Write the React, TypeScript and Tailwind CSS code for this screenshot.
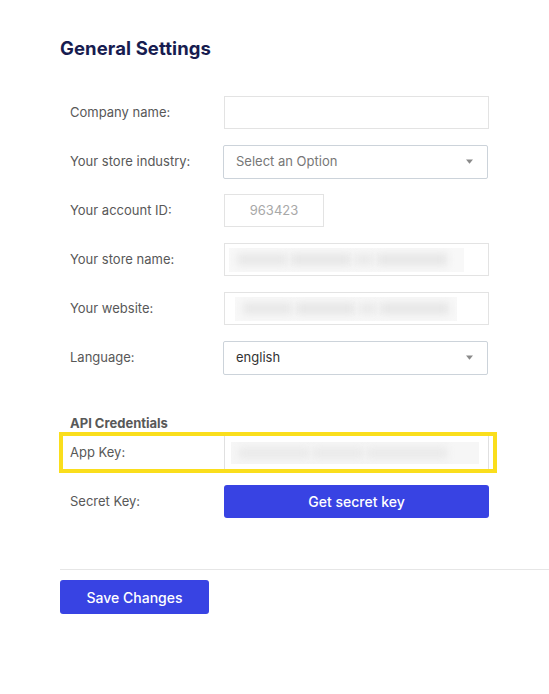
import React from "react";

const Arrow = () => (
  <svg width="7" height="5" viewBox="0 0 7 5" className="shrink-0">
    <path d="M0 0.5 L7 0.5 L3.5 4.8 Z" fill="#8a8a8a" />
  </svg>
);

const Blur = ({ w }: { w: string }) => (
  <div className={`h-[24px] ${w} bg-[#f8f8f8] flex items-center gap-[4px] px-[8px] overflow-hidden`}>
    <div className="h-[11px] w-[50px] bg-[#e6e6e6] blur-[4px]" />
    <div className="h-[11px] w-[60px] bg-[#e4e4e4] blur-[4px]" />
    <div className="h-[11px] w-[18px] bg-[#e8e8e8] blur-[4px]" />
    <div className="h-[11px] w-[70px] bg-[#e4e4e4] blur-[4px]" />
  </div>
);

const Label = ({ children }: { children: React.ReactNode }) => (
  <div className="w-[154px] shrink-0 text-[13px] text-[#585858]">{children}</div>
);

export default function App() {
  return (
    <div
      className="min-h-[694px] bg-white pt-[37px] pl-[60px]"
      style={{ fontFamily: "Inter, 'Liberation Sans', sans-serif" }}
    >
      <h1 className="text-[18.5px] leading-[22px] font-bold text-[#171c50] tracking-[0.1px]">
        General Settings
      </h1>

      <div className="mt-[37px] pl-[10px] w-[429px] flex flex-col">
        <div className="flex flex-col gap-[16px]">
          <div className="flex items-center h-[33px]">
            <Label>Company name:</Label>
            <div className="h-[33px] w-[265px] border border-[#e3e3e3]" />
          </div>
          <div className="flex items-center h-[33px]">
            <Label>Your store industry:</Label>
            <div className="-ml-px h-[34px] w-[265px] border border-[#ccd3da] rounded-[2px] flex items-center justify-between pl-[12px] pr-[14px]">
              <span className="text-[13px] text-[#777]">Select an Option</span>
              <Arrow />
            </div>
          </div>
          <div className="flex items-center h-[33px]">
            <Label>Your account ID:</Label>
            <div className="h-[33px] w-[100px] border border-[#e3e3e3] flex items-center justify-center text-[13px] text-[#a8a8a8]">
              963423
            </div>
          </div>
          <div className="flex items-center h-[33px]">
            <Label>Your store name:</Label>
            <div className="h-[33px] w-[265px] border border-[#e3e3e3] flex items-center pl-[4px]">
              <Blur w="w-[235px]" />
            </div>
          </div>
          <div className="flex items-center h-[33px]">
            <Label>Your website:</Label>
            <div className="h-[33px] w-[265px] border border-[#e3e3e3] flex items-center pl-[10px]">
              <Blur w="w-[222px]" />
            </div>
          </div>
          <div className="flex items-center h-[33px]">
            <Label>Language:</Label>
            <div className="-ml-px h-[34px] w-[265px] border border-[#ccd3da] rounded-[2px] flex items-center justify-between pl-[12px] pr-[14px]">
              <span className="text-[13px] text-[#333]">english</span>
              <Arrow />
            </div>
          </div>
        </div>

        <div className="mt-[41px] text-[13px] leading-[16px] font-bold text-[#585858]">
          API Credentials
        </div>

        <div className="mt-[1px] -ml-[11px] -mr-[8px] border-[4px] border-[#fade1c] flex items-center h-[41px] pl-[7px] pr-[4px]">
          <Label>App Key:</Label>
          <div className="h-full min-w-0 flex-1 border-x border-[#e0e0e0] flex items-center pl-[6px] pr-[9px]">
            <div className="h-[22px] w-full min-w-0 bg-[#f6f6f6] flex items-center gap-[4px] px-[8px] overflow-hidden">
              <div className="h-[10px] w-[70px] shrink-0 bg-[#e8e8e8] blur-[4px]" />
              <div className="h-[10px] w-[50px] shrink-0 bg-[#e8e8e8] blur-[4px]" />
              <div className="h-[10px] w-[80px] shrink-0 bg-[#e8e8e8] blur-[4px]" />
            </div>
          </div>
        </div>

        <div className="mt-[12px] flex items-center h-[33px]">
          <Label>Secret Key:</Label>
          <button className="h-[33px] w-[265px] rounded-[3px] bg-[#3843e3] text-white text-[14px] font-medium">
            Get secret key
          </button>
        </div>
      </div>

      <div className="mt-[51px] h-px bg-[#e6e6e6]" />

      <button className="mt-[10px] h-[34px] w-[149px] rounded-[3px] bg-[#3843e3] text-white text-[14px] font-medium">
        Save Changes
      </button>
    </div>
  );
}
